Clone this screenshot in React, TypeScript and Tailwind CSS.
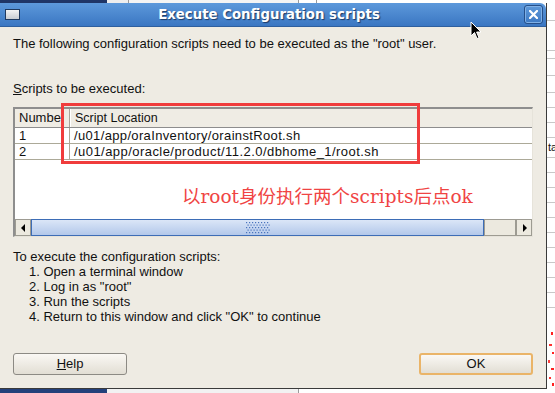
import React from "react";

function Cursor() {
  return (
    <svg width="12" height="19" viewBox="0 0 12 19" className="absolute left-[470px] top-[21px]">
      <path d="M1 1 L1 15 L4.5 11.5 L7 17.5 L9 16.7 L6.6 11 L11 11 Z" fill="#000" stroke="#fff" strokeWidth="1" />
    </svg>
  );
}

function Grip() {
  const dots: React.ReactNode[] = [];
  for (let r = 0; r < 5; r++) {
    for (let c = 0; c < 8; c++) {
      const x = c * 3 + (r % 2 === 0 ? 0 : 1.5);
      const y = r * 2.5;
      dots.push(<rect key={`${r}-${c}`} x={x} y={y} width="1.2" height="1.2" fill="#4a74bd" />);
    }
  }
  return (
    <svg width="24" height="12" viewBox="0 0 24 12">
      {dots}
    </svg>
  );
}

export default function App() {
  const lines = [20, 50, 58, 75, 92, 107, 122, 137, 157, 172, 187, 202, 217, 232, 247, 262, 277, 292, 307];
  return (
    <div className="relative w-[555px] h-[393px] overflow-hidden bg-white flex flex-col font-['Liberation_Sans',Arial,sans-serif] text-[13px] text-[#111]">
      {/* top strip */}
      <div className="h-[3px] flex shrink-0">
        <div className="w-[107px] bg-[#1f3566]" />
        <div className="w-[21px] bg-[#eeeeee]" />
        <div className="w-px bg-[#9a9a9a]" />
        <div className="w-[169px] bg-[#f4f4f4]" />
        <div className="w-px bg-[#9a9a9a]" />
        <div className="w-[17px] bg-white" />
        <div className="w-px bg-[#9a9a9a]" />
        <div className="flex-1 bg-white" />
      </div>

      <div className="h-[386px] flex shrink-0">
        {/* window */}
        <div className="w-[547px] flex flex-col border-r border-b border-[#3a3a3a]">
          {/* title bar */}
          <div className="h-[24px] shrink-0 flex items-center rounded-tr-[6px] bg-gradient-to-b from-[#5d99db] to-[#3a76c2] border-b border-[#2e5f9e] relative">
            <div className="ml-[5px] w-[15px] h-[11px] border border-[#203a60] bg-gradient-to-b from-[#f4f4f4] to-[#c9ccd2]" />
            <div className="flex-1 text-center text-white font-bold text-[13.3px] font-['DejaVu_Sans',sans-serif] [text-shadow:1px_1px_1px_#1c3a66] pr-[6px]">
              Execute Configuration scripts
            </div>
            <div className="mr-[3px] w-[19px] h-[19px] rounded-[3px] border border-[#254f8a] bg-gradient-to-b from-[#5c98da] to-[#3d79c3] flex items-center justify-center shadow-[inset_0_0_0_1px_#7fb0e6]">
              <svg width="9" height="9" viewBox="0 0 9 9">
                <path d="M1 1 L8 8 M8 1 L1 8" stroke="#fff" strokeWidth="2.2" strokeLinecap="square" />
              </svg>
            </div>
          </div>

          {/* body */}
          <div className="flex-1 bg-[#eeebe3] flex flex-col">
            <div className="mt-[9px] ml-[13px] leading-[15px]">
              The following configuration scripts need to be executed as the "root" user.
            </div>
            <div className="mt-[30px] ml-[13px] leading-[15px]">
              <span className="underline">S</span>cripts to be executed:
            </div>

            {/* table */}
            <div className="mt-[11px] ml-[13px] w-[520px] h-[130px] flex flex-col bg-white border-t-2 border-l-2 border-[#8e8e8e] border-r border-b border-r-[#e6e3da] border-b-[#e6e3da]">
              <div className="h-[19px] flex bg-[#efece4] border-b border-[#8d8d8d] leading-[18px] shrink-0">
                <div className="w-[55px] flex border-r border-[#a7a59b]">
                  <div className="w-[47px] overflow-hidden whitespace-nowrap pl-[4px] border-r border-[#a7a59b]">Number</div>
                  <div className="flex-1 border-l border-white" />
                </div>
                <div className="flex-1 pl-[4px] border-l border-white text-[12.5px]">Script Location</div>
              </div>
              <div className="h-[16px] flex border-b border-[#aca998] leading-[15px] shrink-0">
                <div className="w-[55px] pl-[4px] border-r border-[#aca998]">1</div>
                <div className="flex-1 pl-[4px] tracking-[0.35px]">/u01/app/oraInventory/orainstRoot.sh</div>
              </div>
              <div className="h-[16px] flex border-b border-[#aca998] leading-[15px] shrink-0">
                <div className="w-[55px] pl-[4px] border-r border-[#aca998]">2</div>
                <div className="flex-1 pl-[4px] tracking-[0.45px]">/u01/app/oracle/product/11.2.0/dbhome_1/root.sh</div>
              </div>
              <div className="flex-1" />
              {/* scrollbar */}
              <div className="h-[17px] flex shrink-0">
                <div className="w-[16px] bg-[#ece9df] border border-[#9d9b92] flex items-center justify-center">
                  <svg width="5" height="8" viewBox="0 0 5 8"><path d="M4 0 L0 4 L4 8 Z" fill="#000" /></svg>
                </div>
                <div className="w-[453px] border border-[#3d6db6] bg-gradient-to-b from-[#dbe6f7] to-[#b3c8ea] flex items-center justify-center">
                  <Grip />
                </div>
                <div className="flex-1 bg-[#ece9df] border border-[#9d9b92]" />
                <div className="w-[16px] bg-[#ece9df] border border-[#9d9b92] flex items-center justify-center">
                  <svg width="5" height="8" viewBox="0 0 5 8"><path d="M1 0 L5 4 L1 8 Z" fill="#000" /></svg>
                </div>
              </div>
            </div>

            <div className="mt-[12px] ml-[13px] leading-[15px] flex flex-col">
              <div>To execute the configuration scripts:</div>
              <div className="pl-[16px]">1. Open a terminal window</div>
              <div className="pl-[16px]">2. Log in as "root"</div>
              <div className="pl-[16px]">3. Run the scripts</div>
              <div className="pl-[16px]">4. Return to this window and click "OK" to continue</div>
            </div>

            <div className="mt-[29px] flex px-[13px]">
              <div className="w-[114px] h-[22px] rounded-[3px] border border-[#8c8a84] bg-gradient-to-b from-[#faf8f4] to-[#e2ded4] flex items-center justify-center">
                <span><span className="underline">H</span>elp</span>
              </div>
              <div className="ml-auto w-[114px] h-[22px] rounded-[3px] border-2 border-[#eab468] bg-gradient-to-b from-[#faf8f4] to-[#e2ded4] flex items-center justify-center">
                OK
              </div>
            </div>
          </div>
        </div>

        {/* right desktop strip */}
        <div className="flex-1 relative bg-white">
          {lines.map((y) => (
            <div key={y} className="absolute left-0 right-0 h-px bg-[#c8c8c8]" style={{ top: y - 3 }} />
          ))}
          <div className="absolute left-[1px] top-[138px] text-[11px] leading-[12px]">ta</div>
          <svg width="8" height="60" viewBox="0 0 8 60" className="absolute left-0 top-[327px]">
            <rect x="4" y="2" width="2" height="3" fill="#ff2020" />
            <rect x="2" y="14" width="3" height="2" fill="#ff3030" />
            <rect x="5" y="22" width="2" height="2" fill="#ff2020" />
            <rect x="1" y="30" width="2" height="3" fill="#ff4040" />
            <rect x="4" y="38" width="3" height="2" fill="#ff2020" />
            <rect x="2" y="47" width="2" height="2" fill="#ff3030" />
            <rect x="5" y="53" width="2" height="3" fill="#ff2020" />
          </svg>
        </div>
      </div>

      {/* bottom strip */}
      <div className="flex-1 flex">
        <div className="w-[107px] bg-[#23407a]" />
        <div className="w-[191px] bg-[#f2f2f2]" />
        <div className="w-px bg-[#9a9a9a]" />
        <div className="flex-1 bg-white" />
      </div>

      {/* annotation overlays */}
      <div className="absolute left-[61px] top-[103px] w-[359px] h-[61px] border-[3px] border-[#f03c3c]" />
      <div className="absolute left-[182px] top-[186px] text-[18.5px] leading-[22px] text-[#f04444] whitespace-nowrap font-['DejaVu_Serif','Noto_Sans_CJK_SC',serif]">
        以root身份执行两个scripts后点ok
      </div>
      <Cursor />
    </div>
  );
}
